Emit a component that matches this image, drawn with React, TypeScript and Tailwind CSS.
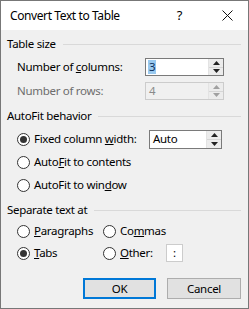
import React from 'react'

const font = { fontFamily: '"Noto Sans", "Open Sans", sans-serif' }

function Spin({ disabled }: { disabled?: boolean }) {
  const arrow = disabled ? '#a0a0a0' : '#222'
  return (
    <div className="flex flex-col w-[15px] h-full border-l border-[#e3e3e3]">
      <div className="flex-1 flex items-center justify-center bg-[#ececec] border-b border-[#d6d6d6]">
        <svg width="7" height="4" viewBox="0 0 7 4">
          <path d="M3.5 0 L7 4 L0 4 Z" fill={arrow} />
        </svg>
      </div>
      <div className="flex-1 flex items-center justify-center bg-[#ececec]">
        <svg width="7" height="4" viewBox="0 0 7 4">
          <path d="M0 0 L7 0 L3.5 4 Z" fill={arrow} />
        </svg>
      </div>
    </div>
  )
}

function GroupHeader({ label, className }: { label: string; className: string }) {
  return (
    <div className={`flex items-center h-[16px] pl-[6px] pr-[7px] ${className}`}>
      <span className="text-[#000] leading-none">{label}</span>
      <div className="flex-1 h-px bg-[#d9d9d9] ml-[7px]" />
    </div>
  )
}

function Radio({ checked }: { checked?: boolean }) {
  return (
    <div className="w-[13px] h-[13px] rounded-full border border-[#333] bg-white flex items-center justify-center shrink-0">
      {checked && <div className="w-[7px] h-[7px] rounded-full bg-[#333]" />}
    </div>
  )
}

export default function App() {
  return (
    <div
      className="relative w-[249px] h-[309px] border border-[#777] bg-[#f0f0f0] text-[11.5px] tracking-[-0.3px] text-[#000] overflow-hidden"
      style={font}
    >
      {/* title bar */}
      <div className="h-[29px] bg-white flex items-center">
        <span className="ml-[9px] text-[12px] tracking-[-0.4px]">Convert Text to Table</span>
        <span className="ml-auto mr-[40px] text-[13px]">?</span>
        <svg width="11" height="11" viewBox="0 0 11 11" className="mr-[15px]">
          <path d="M0.5 0.5 L10.5 10.5 M10.5 0.5 L0.5 10.5" stroke="#111" strokeWidth="1" />
        </svg>
      </div>

      <GroupHeader label="Table size" className="mt-[6px]" />

      <div className="flex items-center h-[18px] mt-[6px]">
        <span className="ml-[16px] w-[128px]">
          Number of <u>c</u>olumns:
        </span>
        <div className="flex h-[18px] w-[79px] border border-[#7a7a7a] bg-white">
          <div className="flex-1 flex items-center pl-[2px]">
            <span className="bg-[#99c9ef] text-[#0c2f5c] leading-[14px] px-px">3</span>
          </div>
          <Spin />
        </div>
      </div>

      <div className="flex items-center h-[18px] mt-[6px]">
        <span className="ml-[16px] w-[128px] text-[#6d6d6d]">Number of rows:</span>
        <div className="flex h-[18px] w-[79px] border border-[#cccccc] bg-[#f0f0f0]">
          <div className="flex-1 flex items-center pl-[3px] text-[#8a8a8a]">4</div>
          <Spin disabled />
        </div>
      </div>

      <GroupHeader label="AutoFit behavior" className="mt-[8px]" />

      <div className="flex items-center h-[20px] mt-[5px]">
        <div className="ml-[16px] flex items-center gap-[4px] w-[132px]">
          <Radio checked />
          <span>
            Fixed column <u>w</u>idth:
          </span>
        </div>
        <div className="flex h-[19px] w-[73px] border border-[#7a7a7a] bg-white">
          <div className="flex-1 flex items-center pl-[3px]">Auto</div>
          <Spin />
        </div>
      </div>

      <div className="flex items-center h-[20px] mt-[3px] ml-[16px] gap-[4px]">
        <Radio />
        <span>
          Auto<u>F</u>it to contents
        </span>
      </div>

      <div className="flex items-center h-[20px] mt-[3px] ml-[16px] gap-[4px]">
        <Radio />
        <span>
          AutoFit to win<u>d</u>ow
        </span>
      </div>

      <GroupHeader label="Separate text at" className="mt-[7px]" />

      <div className="flex items-center h-[20px] mt-[3px] ml-[16px]">
        <div className="flex items-center gap-[4px] w-[86px]">
          <Radio />
          <span>
            <u>P</u>aragraphs
          </span>
        </div>
        <div className="flex items-center gap-[4px]">
          <Radio />
          <span>
            Co<u>m</u>mas
          </span>
        </div>
      </div>

      <div className="flex items-center h-[20px] mt-[2px] ml-[16px]">
        <div className="flex items-center gap-[4px] w-[86px]">
          <Radio checked />
          <span>
            <u>T</u>abs
          </span>
        </div>
        <div className="flex items-center gap-[4px] w-[63px]">
          <Radio />
          <span>
            <u>O</u>ther:
          </span>
        </div>
        <div className="w-[17px] h-[18px] border border-[#cccccc] bg-white flex items-center justify-center leading-none">
          :
        </div>
      </div>

      <div className="flex justify-end gap-[11px] mt-[15px] mr-[7px]">
        <button className="w-[73px] h-[21px] border-2 border-[#0078d7] bg-[#e1e1e1] flex items-center justify-center">
          OK
        </button>
        <button className="w-[74px] h-[21px] border border-[#adadad] bg-[#e1e1e1] flex items-center justify-center">
          Cancel
        </button>
      </div>
    </div>
  )
}
